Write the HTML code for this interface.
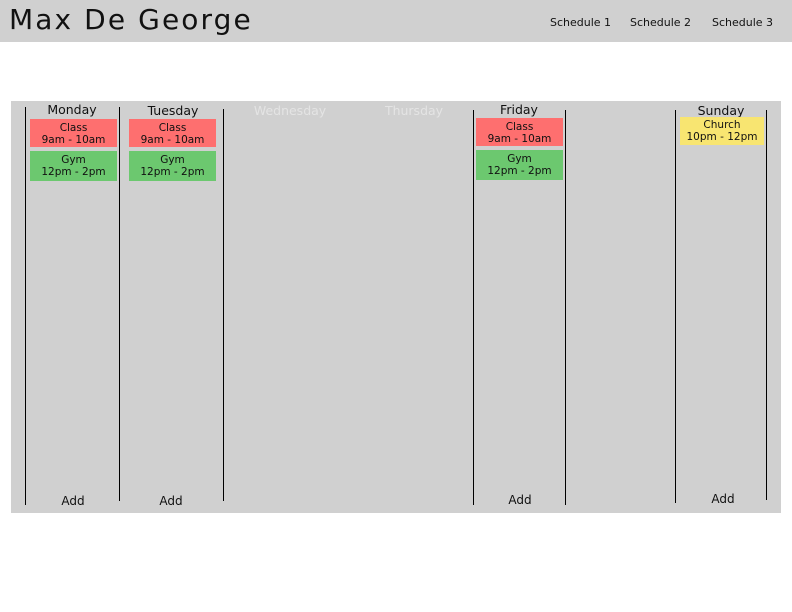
<!DOCTYPE html>
<html><head><meta charset="utf-8"><style>
*{margin:0;padding:0;box-sizing:border-box}
body{width:792px;height:612px;background:#fff;position:relative;overflow:hidden;font-family:"DejaVu Sans","Liberation Sans",sans-serif;}
.a{position:absolute}
#hdr{left:0;top:0;width:792px;height:42px;background:#d0d0d0}
#title{left:9px;top:3px;font-size:28px;letter-spacing:2.1px;color:#111;white-space:nowrap}
.nav{top:16px;font-size:11px;color:#111}
#panel{left:11px;top:101px;width:770px;height:412px;background:#d0d0d0}
.v{width:1px;background:#000}
.day{font-size:12.5px;color:#111;text-align:center;width:100px}
.blk{font-size:10.5px;line-height:12px;text-align:center;color:#111;padding-top:3px}
.r{background:#fe6f6f}.g{background:#6cc86f}.y{background:#f8e571}
.add{font-size:12px;color:#111;text-align:center;width:60px}
</style></head><body>
<div id="hdr" class="a"></div>
<div id="title" class="a">Max De George</div>
<div class="a nav" style="left:550px">Schedule 1</div>
<div class="a nav" style="left:630px">Schedule 2</div>
<div class="a nav" style="left:712px">Schedule 3</div>
<div id="panel" class="a"></div>

<div class="a v" style="left:25px;top:107px;height:398px"></div>
<div class="a v" style="left:119px;top:107px;height:394px"></div>
<div class="a v" style="left:223px;top:109px;height:392px"></div>
<div class="a v" style="left:473px;top:110px;height:395px"></div>
<div class="a v" style="left:565px;top:110px;height:395px"></div>
<div class="a v" style="left:675px;top:110px;height:393px"></div>
<div class="a v" style="left:766px;top:110px;height:390px"></div>

<div class="a day" style="left:22px;top:102px">Monday</div>
<div class="a day" style="left:123px;top:103px">Tuesday</div>
<div class="a day" style="left:240px;top:103px;color:#e4e4e4">Wednesday</div>
<div class="a day" style="left:364px;top:103px;color:#e4e4e4">Thursday</div>
<div class="a day" style="left:469px;top:102px">Friday</div>
<div class="a day" style="left:671px;top:103px">Sunday</div>

<div class="a blk r" style="left:30px;top:119px;width:87px;height:28px">Class<br>9am - 10am</div>
<div class="a blk g" style="left:30px;top:151px;width:87px;height:30px">Gym<br>12pm - 2pm</div>
<div class="a blk r" style="left:129px;top:119px;width:87px;height:28px">Class<br>9am - 10am</div>
<div class="a blk g" style="left:129px;top:151px;width:87px;height:30px">Gym<br>12pm - 2pm</div>
<div class="a blk r" style="left:476px;top:118px;width:87px;height:28px">Class<br>9am - 10am</div>
<div class="a blk g" style="left:476px;top:150px;width:87px;height:30px">Gym<br>12pm - 2pm</div>
<div class="a blk y" style="left:680px;top:117px;width:84px;height:28px;padding-top:2px">Church<br>10pm - 12pm</div>

<div class="a add" style="left:43px;top:494px">Add</div>
<div class="a add" style="left:141px;top:494px">Add</div>
<div class="a add" style="left:490px;top:493px">Add</div>
<div class="a add" style="left:693px;top:492px">Add</div>
</body></html>
